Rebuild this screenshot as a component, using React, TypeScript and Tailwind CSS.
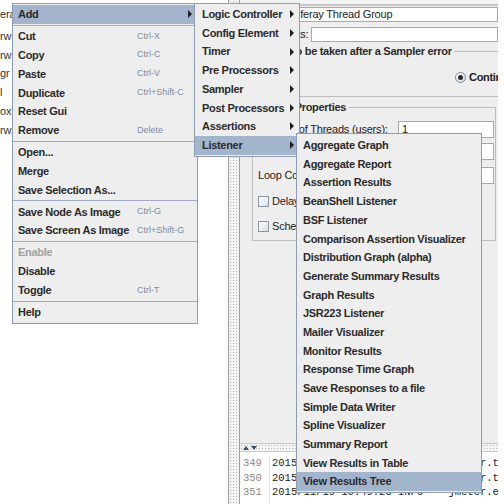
type MenuEntry =
  | { label: string; shortcut?: string; arrow?: boolean; disabled?: boolean; active?: boolean }
  | "sep";

const editMenu: MenuEntry[] = [
  { label: "Add", arrow: true, active: true },
  "sep",
  { label: "Cut", shortcut: "Ctrl-X" },
  { label: "Copy", shortcut: "Ctrl-C" },
  { label: "Paste", shortcut: "Ctrl-V" },
  { label: "Duplicate", shortcut: "Ctrl+Shift-C" },
  { label: "Reset Gui" },
  { label: "Remove", shortcut: "Delete" },
  "sep",
  { label: "Open..." },
  { label: "Merge" },
  { label: "Save Selection As..." },
  "sep",
  { label: "Save Node As Image", shortcut: "Ctrl-G" },
  { label: "Save Screen As Image", shortcut: "Ctrl+Shift-G" },
  "sep",
  { label: "Enable", disabled: true },
  { label: "Disable" },
  { label: "Toggle", shortcut: "Ctrl-T" },
  "sep",
  { label: "Help" },
];

const addMenu = [
  "Logic Controller",
  "Config Element",
  "Timer",
  "Pre Processors",
  "Sampler",
  "Post Processors",
  "Assertions",
  "Listener",
];

const listeners = [
  "Aggregate Graph",
  "Aggregate Report",
  "Assertion Results",
  "BeanShell Listener",
  "BSF Listener",
  "Comparison Assertion Visualizer",
  "Distribution Graph (alpha)",
  "Generate Summary Results",
  "Graph Results",
  "JSR223 Listener",
  "Mailer Visualizer",
  "Monitor Results",
  "Response Time Graph",
  "Save Responses to a file",
  "Simple Data Writer",
  "Spline Visualizer",
  "Summary Report",
  "View Results in Table",
  "View Results Tree",
];

const treeRows = ["era", "rw", "rw", "gr", "l", "ox", "rw"];

const logRows = [
  { n: "349", text: "2015/11/19 10:49:25 INFO  - jmeter.threads.JMeterThread: Thread started" },
  { n: "350", text: "2015/11/19 10:49:25 INFO  - jmeter.threads.JMeterThread: Thread finished" },
  { n: "351", text: "2015/11/19 10:49:25 INFO  - jmeter.engine.StandardJMeterEngine: Notifying" },
];

function Arrow() {
  return (
    <span className="absolute right-[5px] top-1/2 h-0 w-0 -translate-y-1/2 border-y-[4px] border-l-[4px] border-y-transparent border-l-[#1e1e1e]" />
  );
}

function Separator() {
  return (
    <div className="flex h-[3.2px] items-center">
      <div className="h-px w-full bg-[#9eabc1]" />
    </div>
  );
}

function Checkbox() {
  return (
    <span className="inline-block h-[11px] w-[11px] shrink-0 border border-[#8a96a8] bg-gradient-to-br from-white to-[#d7dde8]" />
  );
}

function Field({ value, className }: { value?: string; className: string }) {
  return (
    <div className={`flex h-full items-center border border-[#a9a9a9] bg-white px-[3px] ${className}`}>
      <span className="whitespace-nowrap">{value}</span>
    </div>
  );
}

export default function App() {
  return (
    <div className="relative h-[504px] w-[504px] overflow-hidden bg-white font-['Liberation_Sans',Arial,sans-serif] text-[11px] tracking-[-0.2px] text-[#222]">
      <div className="flex h-full">
        {/* test plan tree, scrolled sideways */}
        <div className="h-full w-[229px] border-r border-[#a0a0a0] bg-white pt-[4.6px]">
          {treeRows.map((t, i) => (
            <div key={i} className={`flex h-[18.8px] items-center whitespace-nowrap text-[#333] ${i === 1 ? "mt-[3.2px]" : ""}`}>
              {t}
            </div>
          ))}
        </div>

        <div className="h-full w-[11px] border-r border-[#a0a0a0] bg-[#f4f4f4] bg-[radial-gradient(circle,#b4b4b4_0.7px,transparent_0.9px)] bg-[length:3px_3px]" />

        {/* thread group panel */}
        <div className="flex h-full w-[258px] flex-col overflow-hidden">
          <div className="flex h-[443px] flex-col bg-[#eeeeee]">
            <div className="h-[4px] bg-[#f3f3f3]" />
            <div className="h-[2px] bg-[#c4c4c4]" />

            <div className="mt-[1px] flex h-[15px] items-center pl-[14px]">
              <span className="w-[34px] shrink-0">Name:</span>
              <Field value="Liferay Thread Group" className="flex-1" />
            </div>
            <div className="mt-[5px] flex h-[15px] items-center pl-[14px]">
              <span className="w-[57px] shrink-0">Comments:</span>
              <Field className="flex-1" />
            </div>

            <fieldset className="ml-[12px] mr-[2px] mt-[3px] border border-[#bdbdbd] pb-[12px]">
              <legend className="ml-[2px] px-[2px] text-[11px] font-bold leading-[13px] tracking-[-0.3px] text-[#2b2b2b]">
                Action to be taken after a Sampler error
              </legend>
              <div className="flex h-[13px] items-center gap-[10px] whitespace-nowrap pl-[202px] pt-0 mt-[13px]">
                <span className="flex items-center gap-[3px]">
                  <span className="flex h-[11px] w-[11px] items-center justify-center rounded-full border border-[#7d8797] bg-gradient-to-br from-white to-[#d3d9e3]">
                    <span className="h-[5px] w-[5px] rounded-full bg-[#2a2a2a]" />
                  </span>
                  <span className="font-bold tracking-[-0.3px]">Continue</span>
                </span>
                <span className="flex items-center gap-[3px]">
                  <span className="h-[11px] w-[11px] rounded-full border border-[#7d8797] bg-white" />
                  <span>Start Next Thread Loop</span>
                </span>
              </div>
            </fieldset>

            <fieldset className="ml-[12px] mr-[2px] mt-[4px] border border-[#bdbdbd] pb-[7px]">
              <legend className="ml-[2px] px-[2px] text-[11px] font-bold leading-[13px] tracking-[-0.3px] text-[#2b2b2b]">
                Thread Properties
              </legend>
              <div className="mt-[7px] flex h-[17px] items-center pl-[5px] pr-[1px]">
                <span className="w-[140px] shrink-0 whitespace-nowrap">Number of Threads (users):</span>
                <Field value="1" className="flex-1" />
              </div>
              <div className="mt-[5px] flex h-[17px] items-center pl-[5px] pr-[1px]">
                <span className="w-[150px] shrink-0 whitespace-nowrap">Ramp-Up Period (in seconds):</span>
                <Field value="1" className="flex-1" />
              </div>
              <div className="mt-[7px] flex h-[17px] items-center gap-[4px] pl-[5px] pr-[1px]">
                <span className="shrink-0 whitespace-nowrap">Loop Count:</span>
                <Checkbox />
                <span>Forever</span>
                <Field value="1" className="flex-1" />
              </div>
              <div className="mt-[11px] flex h-[13px] items-center gap-[3px] whitespace-nowrap pl-[5px]">
                <Checkbox />
                <span>Delay Thread creation until needed</span>
              </div>
              <div className="mt-[12px] flex h-[13px] items-center gap-[3px] whitespace-nowrap pl-[5px]">
                <Checkbox />
                <span>Scheduler</span>
              </div>
            </fieldset>
          </div>

          <div className="flex h-[9px] items-center border-y border-[#c8c8c8] bg-[#f4f4f4] bg-[radial-gradient(circle,#b4b4b4_0.7px,transparent_0.9px)] bg-[length:3px_3px] pl-[3px]">
            <span className="h-0 w-0 border-x-[3.5px] border-b-[4px] border-x-transparent border-b-[#3b4d6e]" />
            <span className="ml-[2px] h-0 w-0 border-x-[3.5px] border-t-[4px] border-x-transparent border-t-[#3b4d6e]" />
          </div>

          <div className="flex h-[52px] bg-white pt-[4px] font-['Liberation_Mono',monospace] text-[10.5px] leading-[14.5px] tracking-normal">
            <div className="w-[30px] shrink-0 border-r border-[#e4e4e4] pl-[3px] text-[#8a8a8a]">
              {logRows.map((r) => (
                <div key={r.n}>{r.n}</div>
              ))}
            </div>
            <div className="pl-[2px] text-[#1a1a1a]">
              {logRows.map((r) => (
                <div key={r.n} className="whitespace-pre">
                  {r.text}
                </div>
              ))}
            </div>
          </div>
        </div>
      </div>

      {/* right-click popup: Edit menu */}
      <div className="absolute left-[12px] top-[3px] z-10 w-[186px] border border-[#8e9cb3] bg-[#eeeeee] py-[1px] text-[11px] tracking-[-0.3px]">
        {editMenu.map((item, i) =>
          item === "sep" ? (
            <Separator key={i} />
          ) : (
            <div
              key={i}
              className={`relative flex h-[18.8px] items-center whitespace-nowrap pl-[5px] ${item.active ? "bg-[#a3b5cd]" : ""}`}
            >
              <span className={`w-[119px] shrink-0 font-bold ${item.disabled ? "text-[#a0a0a0]" : "text-[#2b2b2b]"}`}>
                {item.label}
              </span>
              {item.shortcut && (
                <span className="text-[9px] tracking-normal text-[#7c8ba6]">{item.shortcut}</span>
              )}
              {item.arrow && <Arrow />}
            </div>
          ),
        )}
      </div>

      {/* Add submenu */}
      <div className="absolute left-[194px] top-[3px] z-20 w-[106px] border border-[#8e9cb3] bg-[#eeeeee] py-[1px] text-[11px] tracking-[-0.3px]">
        {addMenu.map((label) => (
          <div
            key={label}
            className={`relative flex h-[18.7px] items-center whitespace-nowrap pl-[7px] font-bold text-[#2b2b2b] ${label === "Listener" ? "bg-[#a3b5cd]" : ""}`}
          >
            {label}
            <Arrow />
          </div>
        ))}
      </div>

      {/* Listener submenu */}
      <div className="absolute left-[296px] top-[133px] z-30 w-[186px] border border-[#8e9cb3] bg-[#eeeeee] pb-[1px] pt-[2px] text-[11px] tracking-[-0.3px]">
        {listeners.map((label) => (
          <div
            key={label}
            className={`flex h-[18.7px] items-center whitespace-nowrap pl-[6px] font-bold text-[#2b2b2b] ${label === "View Results Tree" ? "bg-[#a3b5cd]" : ""}`}
          >
            {label}
          </div>
        ))}
      </div>
    </div>
  );
}
